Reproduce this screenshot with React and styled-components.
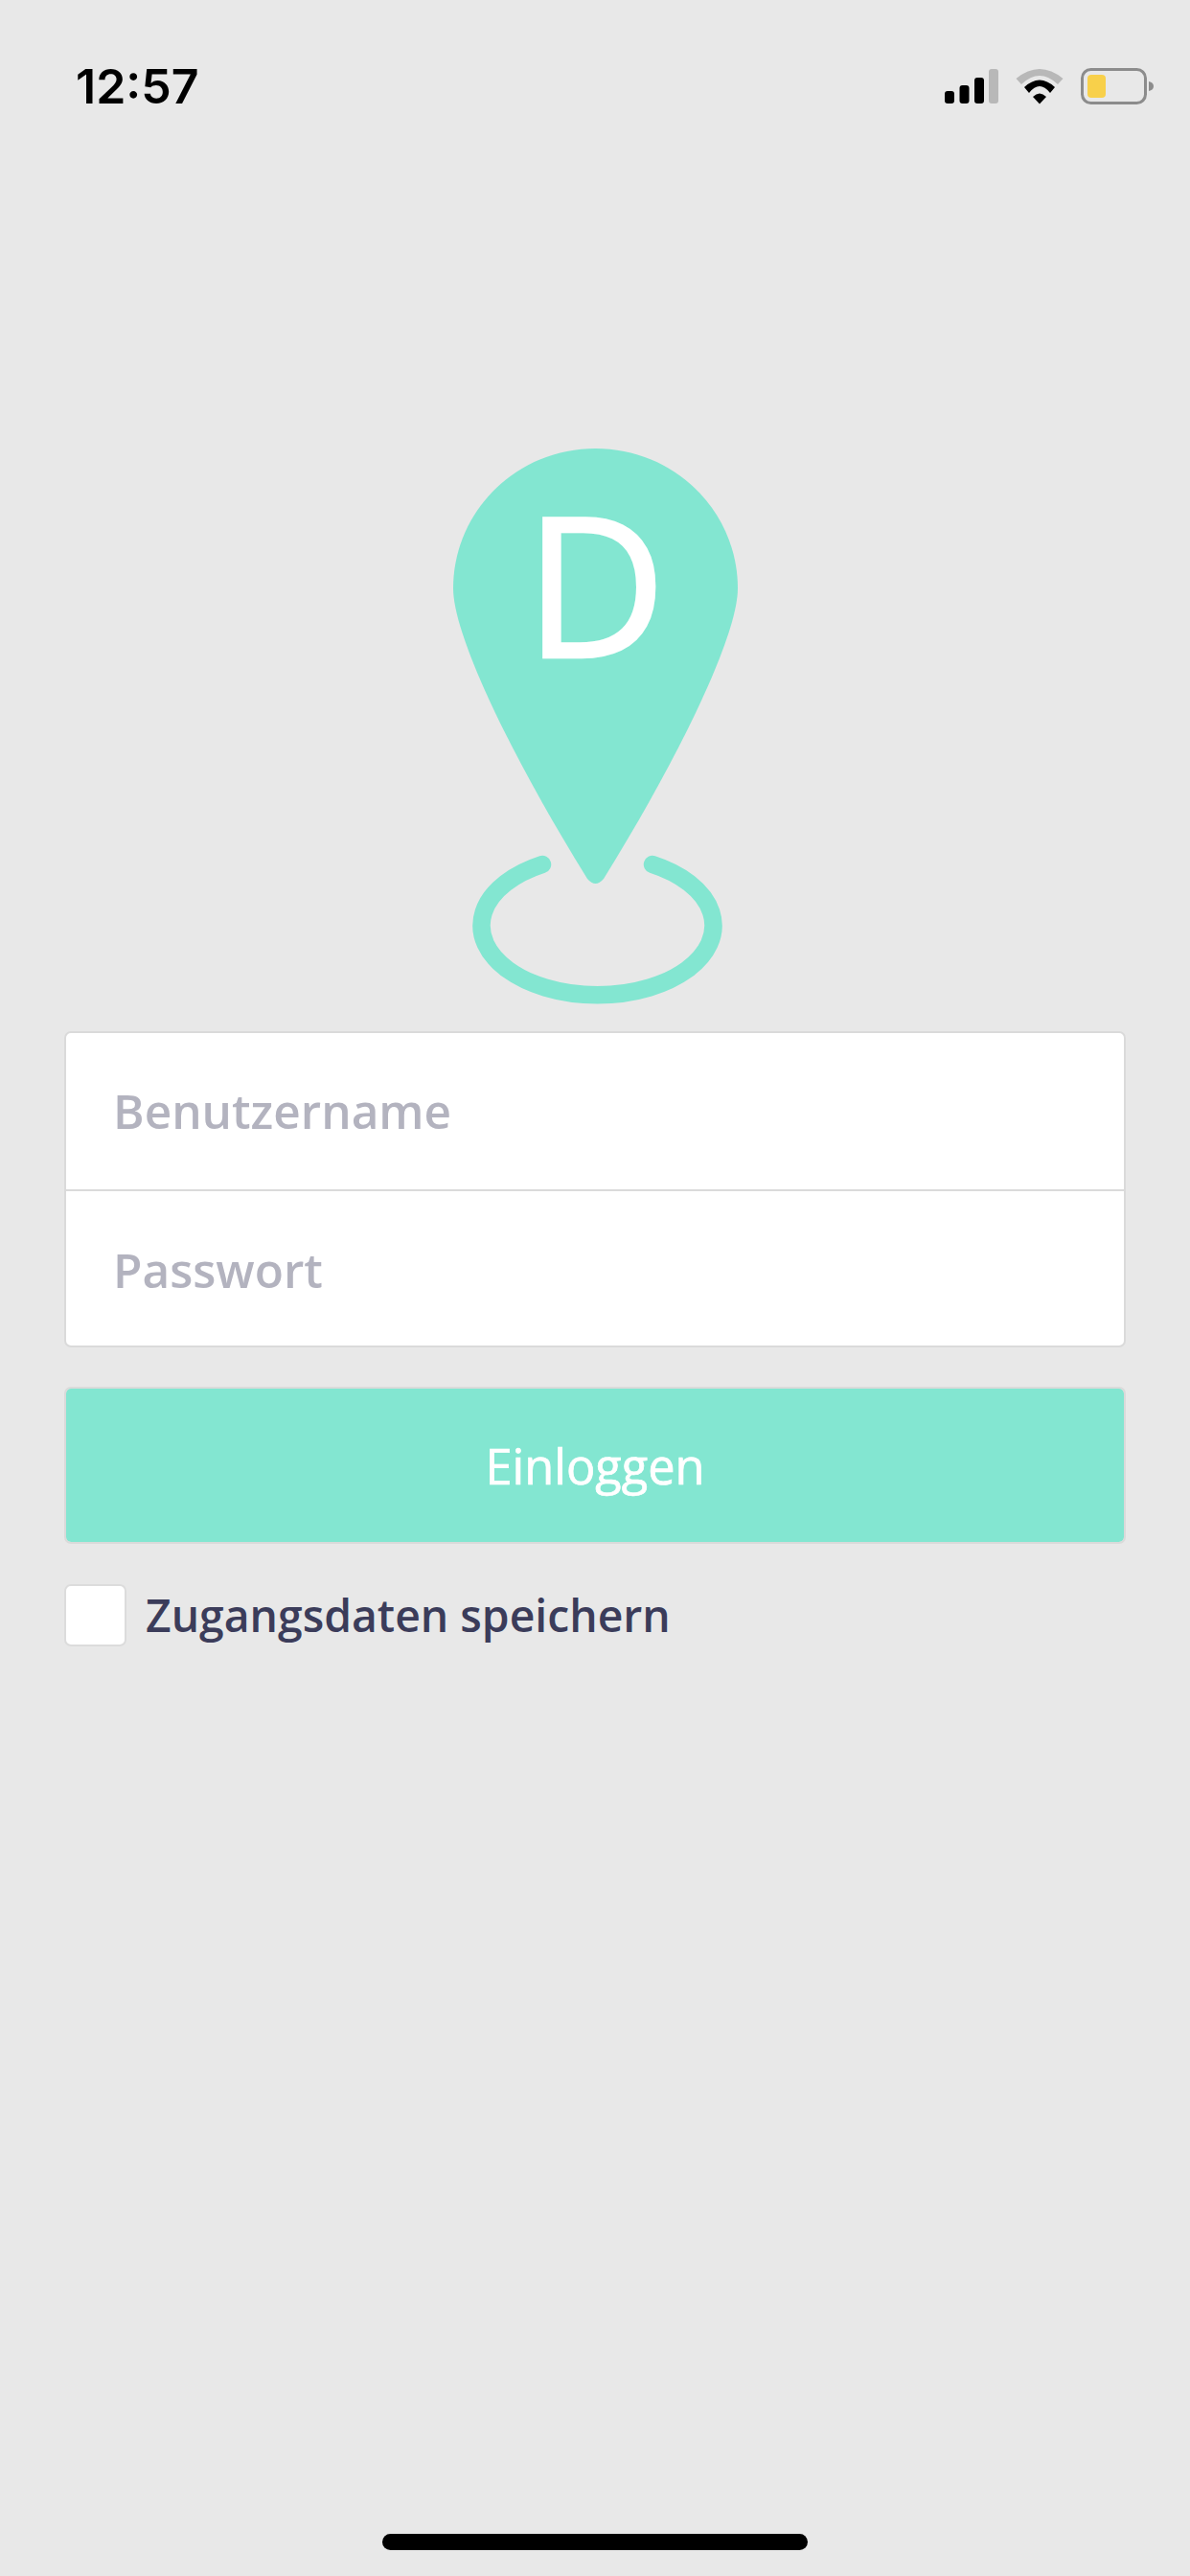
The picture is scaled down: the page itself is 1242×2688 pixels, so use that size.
import React from "react";
import styled, { createGlobalStyle } from "styled-components";

const teal = "#83e6d1";

const GlobalStyle = createGlobalStyle`
  html, body {
    margin: 0;
    padding: 0;
    background: #e8e8e8;
  }
`;

const Screen = styled.div`
  width: 1242px;
  height: 2688px;
  display: flex;
  flex-direction: column;
  background: #e8e8e8;
  font-family: "Open Sans", "Noto Sans", sans-serif;
  overflow: hidden;
`;

const StatusBar = styled.div`
  height: 180px;
  flex: none;
  display: flex;
  align-items: center;
  justify-content: space-between;
  padding: 0 38px 0 79px;
`;

const Time = styled.span`
  font-family: Inter, "Liberation Sans", sans-serif;
  font-size: 50px;
  font-weight: 600;
  line-height: 1;
  color: #000;
`;

const StatusIcons = styled.div`
  display: flex;
  align-items: center;
  gap: 18px;
`;

const LogoWrap = styled.div`
  position: relative;
  width: 297px;
  height: 580px;
  flex: none;
  margin: 288px auto 0;

  svg {
    display: block;
  }
`;

const PinLetter = styled.span`
  position: absolute;
  top: 37px;
  left: 75px;
  font-size: 204px;
  font-weight: 400;
  -webkit-text-stroke: 2.5px #fff;
  line-height: 1;
  color: #fff;
`;

const Form = styled.div`
  display: flex;
  flex-direction: column;
  margin: 28px 67px 0 67px;
`;

const FieldGroup = styled.div`
  height: 330px;
  box-sizing: border-box;
  display: flex;
  flex-direction: column;
  background: #fff;
  border: 2px solid #dadada;
  border-radius: 7px;
`;

const Field = styled.div`
  flex: 1 1 164px;
  box-sizing: border-box;
  display: flex;
  align-items: center;
  padding-left: 49px;
  font-size: 49.5px;
  font-weight: 600;
  color: #b3b3bf;

  & + & {
    padding-top: 4px;
    border-top: 2px solid #dadada;
  }
`;

const LoginButton = styled.button`
  height: 164px;
  margin-top: 41px;
  padding: 0;
  box-sizing: border-box;
  border: 2px solid #dadada;
  border-radius: 7px;
  background: ${teal};
  background-clip: padding-box;
  font-family: inherit;
  font-size: 50.5px;
  font-weight: 400;
  -webkit-text-stroke: 0.7px #fff;
  color: #fff;
`;

const RememberRow = styled.label`
  display: flex;
  align-items: center;
  gap: 20px;
  margin-top: 42px;
`;

const CheckBox = styled.span`
  width: 65px;
  height: 65px;
  box-sizing: border-box;
  background: #fff;
  border: 2px solid #dcdcdc;
  border-radius: 7px;
`;

const RememberText = styled.span`
  font-size: 46.3px;
  font-weight: 600;
  color: #3b3c5a;
`;

const HomeIndicator = styled.div`
  width: 444px;
  height: 17px;
  flex: none;
  margin: auto auto 27px;
  border-radius: 9px;
  background: #000;
`;

const SignalIcon = () => (
  <svg width="56" height="36" viewBox="0 0 56 36">
    <rect x="0" y="23" width="10" height="13" rx="3" fill="#000" />
    <rect x="15.5" y="17" width="10" height="19" rx="3" fill="#000" />
    <rect x="31" y="9" width="10" height="27" rx="3" fill="#000" />
    <rect x="46" y="0" width="10" height="36" rx="3" fill="#b8b8b8" />
  </svg>
);

const WifiIcon = () => (
  <svg width="50" height="37" viewBox="0 0 50 37">
    <path d="M0.5 10 Q25 -10 49.5 10 L44 16 Q25 -2 6 16 Z" fill="#b8b8b8" />
    <path d="M9 19 Q25 4 41 19 L36 25 Q25 11 14 25 Z" fill="#000" />
    <path d="M18 29 Q25 22 32 29 L25 36.5 Z" fill="#000" />
  </svg>
);

const BatteryIcon = () => (
  <svg width="76" height="38" viewBox="0 0 76 38">
    <rect x="1.5" y="1.5" width="66" height="35" rx="9" fill="none" stroke="#8c8c8c" strokeWidth="3" />
    <rect x="7" y="7" width="19" height="24" rx="4" fill="#f8d04a" />
    <path d="M71 14 Q76 15 76 19 Q76 23 71 24 Z" fill="#8c8c8c" />
  </svg>
);

const PinLogo = () => (
  <svg width="297" height="580" viewBox="0 0 297 580">
    <path
      d="M148.5 0 C66.5 0 0 65 0 146 C0 195 60 320 140 449 Q148.5 459 157 449 C237 320 297 195 297 146 C297 65 230.5 0 148.5 0 Z"
      fill={teal}
    />
    <path
      d="M93 434 A121 72.5 0 1 0 208 434"
      fill="none"
      stroke={teal}
      strokeWidth="18.5"
      strokeLinecap="round"
    />
  </svg>
);

const App = () => (
  <Screen>
    <GlobalStyle />
    <StatusBar>
      <Time>12:57</Time>
      <StatusIcons>
        <SignalIcon />
        <WifiIcon />
        <BatteryIcon />
      </StatusIcons>
    </StatusBar>

    <LogoWrap>
      <PinLogo />
      <PinLetter>D</PinLetter>
    </LogoWrap>

    <Form>
      <FieldGroup>
        <Field>Benutzername</Field>
        <Field>Passwort</Field>
      </FieldGroup>
      <LoginButton>Einloggen</LoginButton>
      <RememberRow>
        <CheckBox />
        <RememberText>Zugangsdaten speichern</RememberText>
      </RememberRow>
    </Form>

    <HomeIndicator />
  </Screen>
);

export default App;
